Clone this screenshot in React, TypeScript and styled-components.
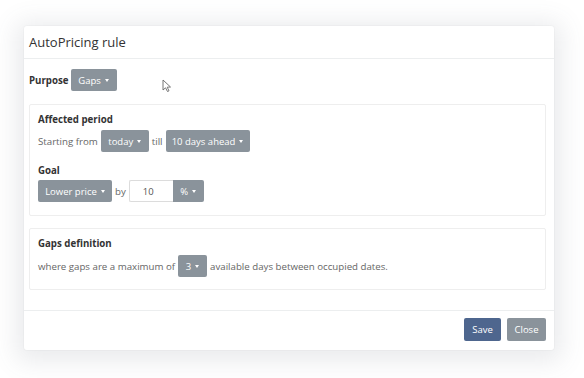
import React from "react";
import styled, { createGlobalStyle } from "styled-components";

const Global = createGlobalStyle`
  html, body { margin: 0; padding: 0; background: #fff; }
  body { font-family: "Open Sans", "Liberation Sans", sans-serif; color: #555; font-size: 9.7px; }
  * { box-sizing: border-box; }
`;

const Stage = styled.div`
  width: 584px;
  height: 378px;
  padding: 26px 30px 28px 24px;
  position: relative;
  background: #fff;
`;

const Modal = styled.div`
  width: 530px;
  height: 324px;
  background: #fff;
  border-radius: 3px;
  box-shadow: 0 0 0 1px rgba(0,0,0,0.02), 0 4px 24px 8px rgba(90, 100, 115, 0.13);
  display: flex;
  flex-direction: column;
`;

const Header = styled.div`
  height: 33px;
  border-bottom: 1px solid #eceeef;
  display: flex;
  align-items: center;
  padding: 0 5px;
`;

const Title = styled.h4`
  margin: 0;
  font-family: "Open Sans", sans-serif;
  font-weight: 500;
  font-size: 13px;
  color: #333;
`;

const Body = styled.div`
  flex: 1;
  padding: 10px 8px 0 5px;
  display: flex;
  flex-direction: column;
`;

const Footer = styled.div`
  height: 40px;
  border-top: 1px solid #eceeef;
  display: flex;
  justify-content: flex-end;
  align-items: center;
  gap: 6px;
  padding: 0 8px 2px 0;
`;

const Row = styled.div<{ $mt?: number }>`
  display: flex;
  align-items: center;
  gap: 3px;
  margin-top: ${(p) => p.$mt ?? 0}px;
  white-space: nowrap;
`;

const Label = styled.span`
  font-weight: 700;
  color: #333;
  font-size: 9.7px;
  margin-right: -1px;
`;

const Text = styled.span`
  color: #666;
  font-size: 9.7px;
`;

const Panel = styled.div<{ $h: number; $mt: number }>`
  border: 1px solid #eeeeee;
  border-radius: 2px;
  height: ${(p) => p.$h}px;
  margin-top: ${(p) => p.$mt}px;
  padding: 7px 8px;
`;

const Heading = styled.div<{ $mt?: number }>`
  font-weight: 700;
  color: #333;
  font-size: 9.7px;
  margin-top: ${(p) => p.$mt ?? 0}px;
  line-height: 16px;
`;

const Drop = styled.button<{ $w: number; $h?: number }>`
  width: ${(p) => p.$w}px;
  height: ${(p) => p.$h ?? 22}px;
  background: #8a939b;
  color: #fff;
  border: none;
  border-radius: 2px;
  font-family: "Open Sans", sans-serif;
  font-size: 9.5px;
  padding: 0;
  display: inline-flex;
  align-items: center;
  justify-content: center;
  gap: 4px;
  cursor: pointer;
`;

const Caret = styled.span`
  width: 0;
  height: 0;
  border-left: 2.5px solid transparent;
  border-right: 2.5px solid transparent;
  border-top: 3px solid #fff;
  margin-top: 1px;
`;

const Group = styled.div`
  display: inline-flex;
  margin-left: 0;
`;

const Input = styled.input`
  width: 44px;
  height: 22px;
  border: 1px solid #dcdcdc;
  border-right: none;
  border-radius: 2px 0 0 2px;
  padding: 0 0 0 13px;
  font-family: "Open Sans", sans-serif;
  font-size: 9.5px;
  color: #555;
  outline: none;
`;

const Addon = styled(Drop)`
  border-radius: 0 2px 2px 0;
`;

const ActionBtn = styled.button<{ $bg: string; $w: number }>`
  width: ${(p) => p.$w}px;
  height: 23px;
  background: ${(p) => p.$bg};
  color: #fff;
  border: none;
  border-radius: 2px;
  font-family: "Open Sans", sans-serif;
  font-size: 9.5px;
  padding: 0;
`;

const Cursor = styled.svg`
  position: absolute;
  left: 162px;
  top: 79px;
`;

function Dd({ label, w }: { label: string; w: number }) {
  return (
    <Drop $w={w}>
      {label}
      <Caret />
    </Drop>
  );
}

export default function App() {
  return (
    <Stage>
      <Global />
      <Modal>
        <Header>
          <Title>AutoPricing rule</Title>
        </Header>
        <Body>
          <Row>
            <Label>Purpose</Label>
            <Dd label="Gaps" w={46} />
          </Row>
          <Panel $h={112} $mt={13}>
            <Heading>Affected period</Heading>
            <Row $mt={2}>
              <Text>Starting from</Text>
              <Dd label="today" w={48} />
              <Text>till</Text>
              <Dd label="10 days ahead" w={84} />
            </Row>
            <Heading $mt={11}>Goal</Heading>
            <Row $mt={1}>
              <Dd label="Lower price" w={74} />
              <Text>by</Text>
              <Group>
                <Input defaultValue="10" />
                <Addon $w={31}>
                  %
                  <Caret />
                </Addon>
              </Group>
            </Row>
          </Panel>
          <Panel $h={62} $mt={12}>
            <Heading>Gaps definition</Heading>
            <Row $mt={3}>
              <Text>where gaps are a maximum of</Text>
              <Dd label="3" w={29} />
              <Text>available days between occupied dates.</Text>
            </Row>
          </Panel>
        </Body>
        <Footer>
          <ActionBtn $bg="#4e668e" $w={37}>Save</ActionBtn>
          <ActionBtn $bg="#8a939b" $w={39}>Close</ActionBtn>
        </Footer>
      </Modal>
      <Cursor width="10" height="14" viewBox="0 0 10 14">
        <path d="M1 1 L1 11 L3.5 8.8 L5.5 12.5 L7 11.8 L5.2 8.2 L8.5 8 Z" fill="#fff" stroke="#666" strokeWidth="0.9" strokeLinejoin="round" />
      </Cursor>
    </Stage>
  );
}
